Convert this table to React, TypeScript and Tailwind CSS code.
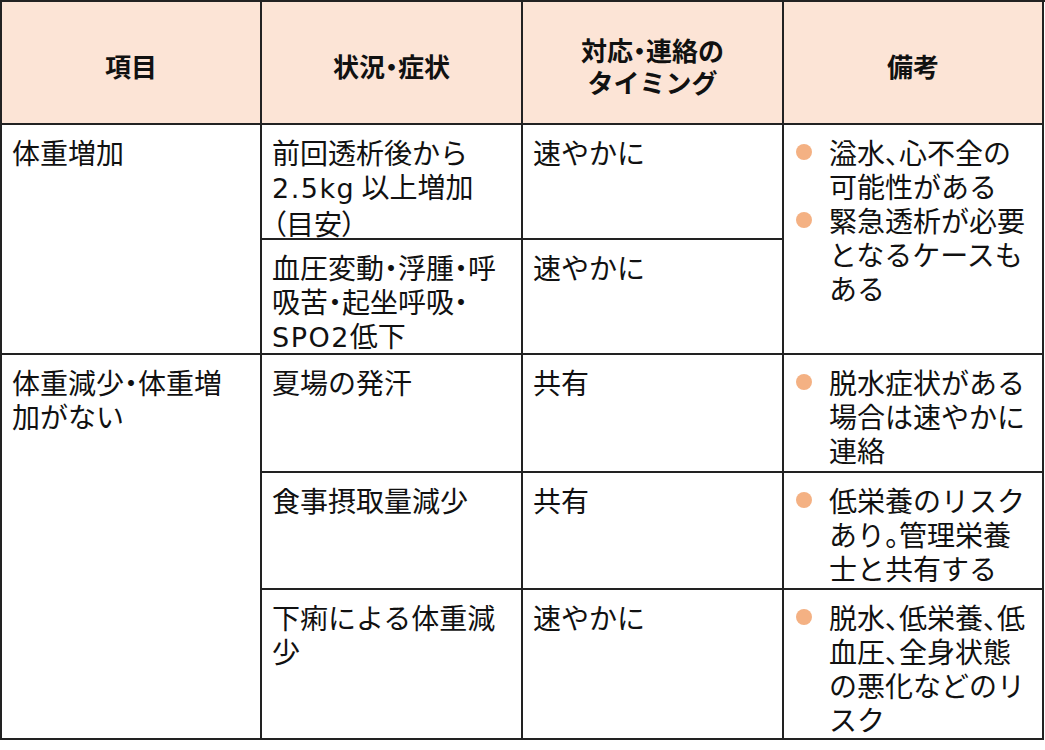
import React from "react";

const font = "font-['Noto_Sans_CJK_JP','Noto_Sans',sans-serif]";

const P = ({ c }: { c: string }) => <span className="[font-feature-settings:'palt']">{c}</span>;
const Dot = () => <P c="・" />;
const Comma = () => <P c="、" />;
const L = ({ children }: { children?: React.ReactNode }) => (
  <span className="font-['DejaVu_Sans',sans-serif] tracking-[1.5px] text-[27px]">{children}</span>
);

const Cell = ({ className = "", children }: { className?: string; children?: React.ReactNode }) => (
  <div className={`border-r-2 border-b-2 border-[#222] ${className}`}>{children}</div>
);

const Body = ({ children, className = "" }: { children?: React.ReactNode; className?: string }) => (
  <Cell className={`pt-[10px] pl-[10px] text-[28px] leading-[34px] whitespace-nowrap ${className}`}>{children}</Cell>
);

const Bullets = ({ items }: { items: React.ReactNode[] }) => (
  <div className="flex flex-col">
    {items.map((it, i) => (
      <div key={i} className="flex items-start">
        <span className="mt-[9px] ml-[1px] w-[16px] h-[16px] rounded-full bg-[#F4B183] shrink-0" />
        <div className="ml-[17px]">{it}</div>
      </div>
    ))}
  </div>
);

const Head = ({ children }: { children?: React.ReactNode }) => (
  <Cell className="bg-[#FCE4D6] flex items-center justify-center text-center font-bold text-[26px] leading-[32px] pt-[6px]">
    <div>{children}</div>
  </Cell>
);

export default function App() {
  return (
    <div className={`${font} bg-white text-[#111] w-[1045px] h-[750px]`}>
      <div className="grid grid-cols-[260px_261px_261px_260px] grid-rows-[123px_115px_115px_118px_117px_150px] border-t-2 border-l-2 border-[#222] w-[1044px] box-content">
        <Head>項目</Head>
        <Head>
          状況<Dot />症状
        </Head>
        <Head>
          対応<Dot />連絡の
          <br />
          タイミング
        </Head>
        <Head>備考</Head>

        <Body className="row-span-2">体重増加</Body>
        <Body>
          前回透析後から
          <br />
          <L>2.5kg</L> 以上増加
          <br />
          <P c="（" />目安<P c="）" />
        </Body>
        <Body>速やかに</Body>
        <Body className="row-span-2 pl-[11px]">
          <Bullets
            items={[
              <>
                溢水<Comma />心不全の
                <br />
                可能性がある
              </>,
              <>
                緊急透析が必要
                <br />
                となるケースも
                <br />
                ある
              </>,
            ]}
          />
        </Body>
        <Body>
          血圧変動<Dot />浮腫<Dot />呼
          <br />
          吸苦<Dot />起坐呼吸<Dot />
          <br />
          <L>SPO2</L>低下
        </Body>
        <Body>速やかに</Body>

        <Body className="row-span-3">
          体重減少<Dot />体重増
          <br />
          加がない
        </Body>
        <Body>夏場の発汗</Body>
        <Body>共有</Body>
        <Body className="pl-[11px]">
          <Bullets
            items={[
              <>
                脱水症状がある
                <br />
                場合は速やかに
                <br />
                連絡
              </>,
            ]}
          />
        </Body>
        <Body>食事摂取量減少</Body>
        <Body>共有</Body>
        <Body className="pl-[11px]">
          <Bullets
            items={[
              <>
                低栄養のリスク
                <br />
                あり<P c="。" />管理栄養
                <br />
                士と共有する
              </>,
            ]}
          />
        </Body>
        <Body>
          下痢による体重減
          <br />
          少
        </Body>
        <Body>速やかに</Body>
        <Body className="pl-[11px]">
          <Bullets
            items={[
              <>
                脱水<Comma />低栄養<Comma />低
                <br />
                血圧<Comma />全身状態
                <br />
                の悪化などのリ
                <br />
                スク
              </>,
            ]}
          />
        </Body>
      </div>
    </div>
  );
}
